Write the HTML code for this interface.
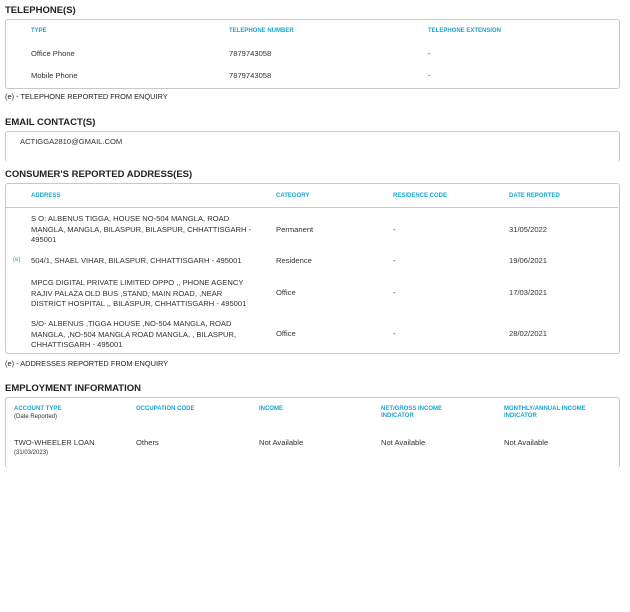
<!DOCTYPE html><html><head><style>
body{margin:0;width:630px;height:612px;background:#fff;font-family:"Liberation Sans",sans-serif;color:#333;position:relative;overflow:hidden}
div{position:absolute;white-space:nowrap}
.t{font-weight:bold;font-size:9.5px;color:#222;left:5px}
.b{border:1px solid #c8c8c8;border-radius:3px;left:5px;width:613px}
.h{font-size:6px;font-weight:bold;color:#1aa6cf}
.v{font-size:7.6px;line-height:10.5px}
.n{font-size:7.4px;left:5px;color:#222}
</style></head><body>
<div class="t" style="top:5px">TELEPHONE(S)</div>
<div class="b" style="top:19px;height:68px"></div>
<div class="h" style="left:31px;top:28px">TYPE</div>
<div class="h" style="left:229px;top:28px">TELEPHONE NUMBER</div>
<div class="h" style="left:428px;top:28px">TELEPHONE EXTENSION</div>
<div class="v" style="left:31px;top:49px">Office Phone</div>
<div class="v" style="left:229px;top:49px">7879743058</div>
<div class="v" style="left:428px;top:49px">-</div>
<div class="v" style="left:31px;top:71px">Mobile Phone</div>
<div class="v" style="left:229px;top:71px">7879743058</div>
<div class="v" style="left:428px;top:71px">-</div>
<div class="n" style="top:92px">(e) - TELEPHONE REPORTED FROM ENQUIRY</div>

<div class="t" style="top:117px">EMAIL CONTACT(S)</div>
<div class="b" style="top:131px;height:30px;border-bottom:none"></div>
<div class="v" style="left:20px;top:137px">ACTIGGA2810@GMAIL.COM</div>

<div class="t" style="top:169px">CONSUMER'S REPORTED ADDRESS(ES)</div>
<div class="b" style="top:183px;height:169px"></div>
<div style="left:6px;top:207px;width:612px;border-top:1px solid #c8c8c8"></div>
<div class="h" style="left:31px;top:193px">ADDRESS</div>
<div class="h" style="left:276px;top:193px">CATEGORY</div>
<div class="h" style="left:393px;top:193px">RESIDENCE CODE</div>
<div class="h" style="left:509px;top:193px">DATE REPORTED</div>
<div class="v" style="left:31px;top:214px">S O: ALBENUS TIGGA, HOUSE NO-504 MANGLA, ROAD<br>MANGLA, MANGLA, BILASPUR, BILASPUR, CHHATTISGARH -<br>495001</div>
<div class="v" style="left:276px;top:225px">Permanent</div><div class="v" style="left:393px;top:225px">-</div><div class="v" style="left:509px;top:225px">31/05/2022</div>
<div class="h" style="left:13px;top:257px;font-weight:normal">(e)</div>
<div class="v" style="left:31px;top:256px">504/1, SHAEL VIHAR, BILASPUR, CHHATTISGARH - 495001</div>
<div class="v" style="left:276px;top:256px">Residence</div><div class="v" style="left:393px;top:256px">-</div><div class="v" style="left:509px;top:256px">19/06/2021</div>
<div class="v" style="left:31px;top:278px">MPCG DIGITAL PRIVATE LIMITED OPPO ,, PHONE AGENCY<br>RAJIV PALAZA OLD BUS ,STAND, MAIN ROAD, ,NEAR<br>DISTRICT HOSPITAL ,, BILASPUR, CHHATTISGARH - 495001</div>
<div class="v" style="left:276px;top:288px">Office</div><div class="v" style="left:393px;top:288px">-</div><div class="v" style="left:509px;top:288px">17/03/2021</div>
<div class="v" style="left:31px;top:319px">S/O- ALBENUS ,TIGGA HOUSE ,NO-504 MANGLA, ROAD<br>MANGLA, ,NO-504 MANGLA ROAD MANGLA, , BILASPUR,<br>CHHATTISGARH - 495001</div>
<div class="v" style="left:276px;top:329px">Office</div><div class="v" style="left:393px;top:329px">-</div><div class="v" style="left:509px;top:329px">28/02/2021</div>
<div class="n" style="top:359px">(e) - ADDRESSES REPORTED FROM ENQUIRY</div>

<div class="t" style="top:383px">EMPLOYMENT INFORMATION</div>
<div class="b" style="top:397px;height:70px;border-bottom:none"></div>
<div class="h" style="left:14px;top:406px">ACCOUNT TYPE</div>
<div style="left:14px;top:414px;font-size:6px;color:#333">(Date Reported)</div>
<div class="h" style="left:136px;top:406px">OCCUPATION CODE</div>
<div class="h" style="left:259px;top:406px">INCOME</div>
<div class="h" style="left:381px;top:406px;line-height:7px">NET/GROSS INCOME<br>INDICATOR</div>
<div class="h" style="left:504px;top:406px;line-height:7px">MONTHLY/ANNUAL INCOME<br>INDICATOR</div>
<div class="v" style="left:14px;top:438px">TWO-WHEELER LOAN</div>
<div style="left:14px;top:450px;font-size:6px;color:#333">(31/03/2023)</div>
<div class="v" style="left:136px;top:438px">Others</div>
<div class="v" style="left:259px;top:438px">Not Available</div>
<div class="v" style="left:381px;top:438px">Not Available</div>
<div class="v" style="left:504px;top:438px">Not Available</div>
</body></html>
